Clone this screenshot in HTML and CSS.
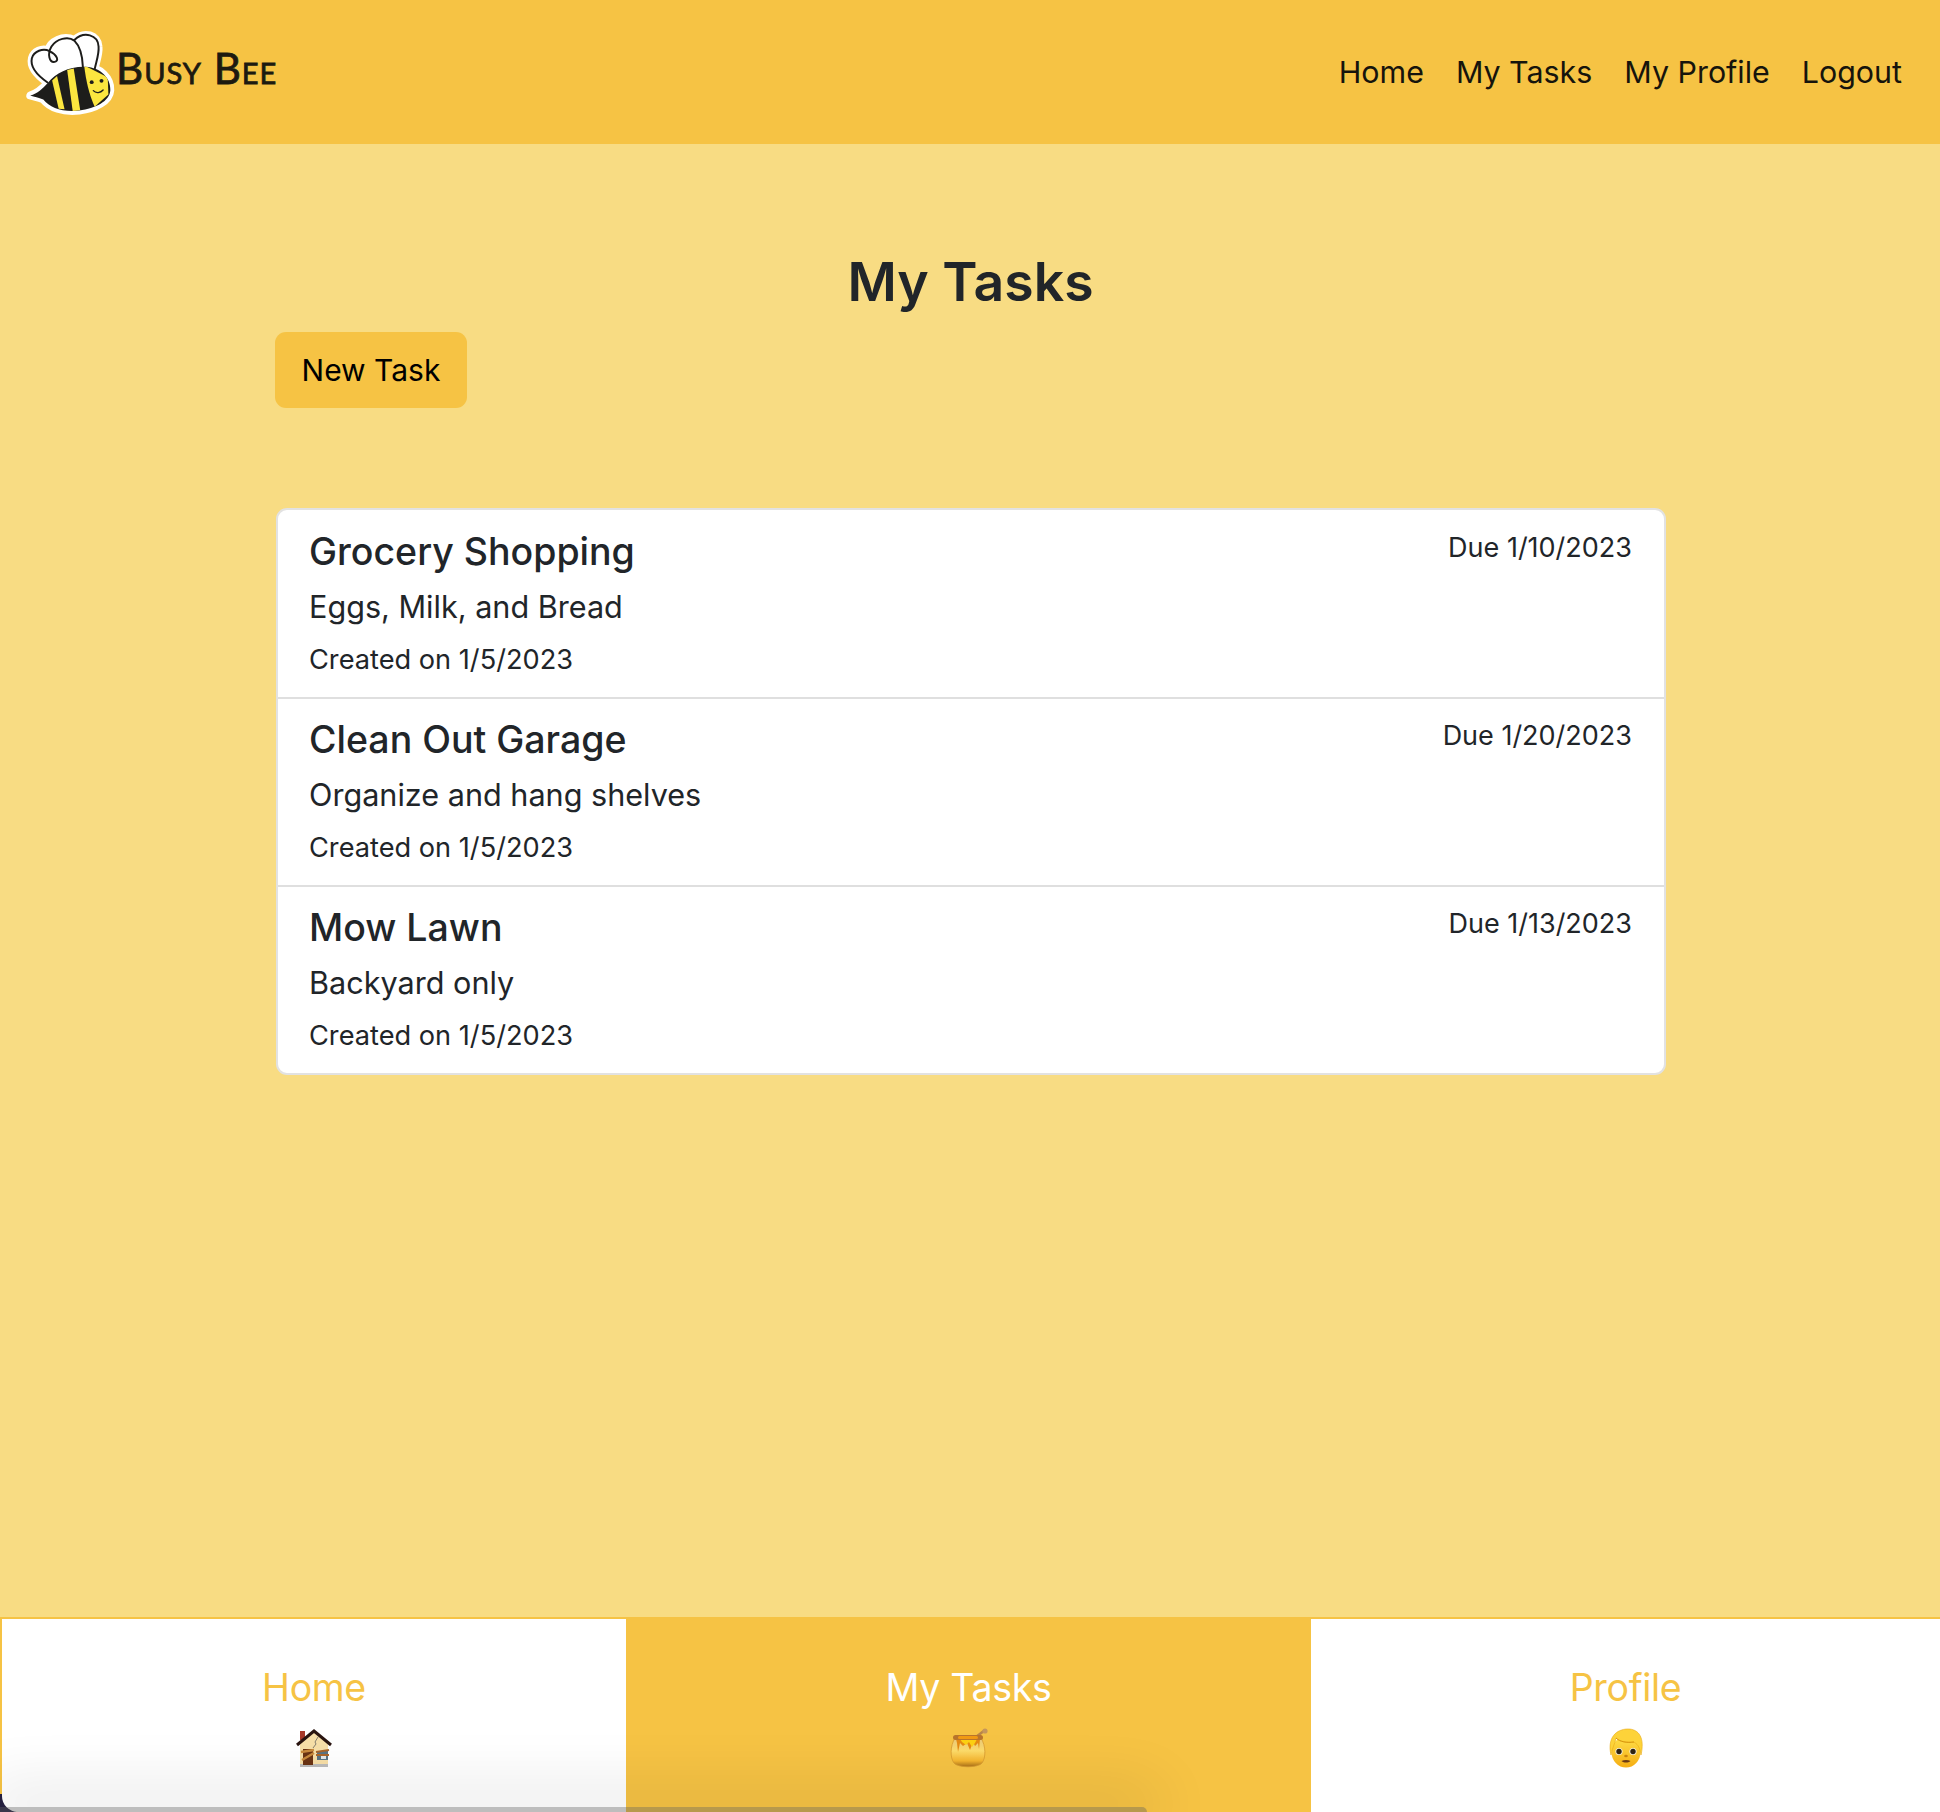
FILE: index.html
```html
<!DOCTYPE html>
<html lang="en">
<head>
    <meta charset="UTF-8">
    <meta name="viewport" content="width=device-width, initial-scale=1.0">
    <title>Busy Bee</title>
    <link rel="stylesheet" href="styles.css">
</head>
<body>
    <header class="navbar">
        <a class="brand" href="#">
            <svg class="bee" viewBox="0 0 330 315" aria-hidden="true">
                <defs>
                    <clipPath id="beeBody">
                        <path d="M25 228 C48 220 62 208 78 190 C105 158 145 138 195 140 C240 142 272 175 270 212 C268 245 225 268 175 274 C125 280 85 265 65 240 C50 234 38 232 25 228 Z"/>
                    </clipPath>
                </defs>
                <g fill="#fff" stroke="#fff" stroke-width="24" stroke-linejoin="round">
                    <path d="M78 188 C45 165 24 140 30 114 C36 92 62 82 80 90 C86 62 125 42 160 58 C190 30 232 42 234 78 C236 100 228 120 222 145 Z"/>
                    <path d="M25 228 C48 220 62 208 78 190 C105 158 145 138 195 140 C240 142 272 175 270 212 C268 245 225 268 175 274 C125 280 85 265 65 240 C50 234 38 232 25 228 Z"/>
                </g>
                <path d="M78 188 C45 165 24 140 30 114 C36 92 64 82 84 92 C108 104 114 122 100 125 C84 128 76 102 90 78 C105 55 140 45 160 60 C178 78 185 110 186 140" fill="none" stroke="#1d1d1b" stroke-width="6" stroke-linecap="round"/>
                <path d="M160 58 C190 30 232 42 234 78 C236 100 228 120 222 148" fill="none" stroke="#1d1d1b" stroke-width="6" stroke-linecap="round"/>
                <path d="M25 228 C48 220 62 208 78 190 C105 158 145 138 195 140 C240 142 272 175 270 212 C268 245 225 268 175 274 C125 280 85 265 65 240 C50 234 38 232 25 228 Z" fill="#1d1d1b"/>
                <g clip-path="url(#beeBody)" fill="#fbe63f">
                    <path d="M92 182 L107 168 L130 270 L112 268 Z"/>
                    <path d="M138 150 L158 145 L178 274 L155 276 Z"/>
                    <path d="M190 136 L262 172 L264 225 L222 262 C205 225 195 180 190 136 Z"/>
                </g>
                <circle cx="213" cy="187" r="6" fill="#1d1d1b"/>
                <circle cx="243" cy="183" r="6" fill="#1d1d1b"/>
                <path d="M218 213 C226 222 240 220 248 211" fill="none" stroke="#1d1d1b" stroke-width="4" stroke-linecap="round"/>
            </svg>
            <span class="brand-name">Busy Bee</span>
        </a>
        <nav class="nav-links">
            <a href="#">Home</a>
            <a href="#">My Tasks</a>
            <a href="#">My Profile</a>
            <a href="#">Logout</a>
        </nav>
    </header>

    <main class="content">
        <h1>My Tasks</h1>
        <a class="new-task" href="#">New Task</a>
        <ul class="task-list">
            <li class="task">
                <div class="task-top">
                    <h2>Grocery Shopping</h2>
                    <span class="due">Due 1/10/2023</span>
                </div>
                <p class="task-desc">Eggs, Milk, and Bread</p>
                <p class="task-created">Created on 1/5/2023</p>
            </li>
            <li class="task">
                <div class="task-top">
                    <h2>Clean Out Garage</h2>
                    <span class="due">Due 1/20/2023</span>
                </div>
                <p class="task-desc">Organize and hang shelves</p>
                <p class="task-created">Created on 1/5/2023</p>
            </li>
            <li class="task">
                <div class="task-top">
                    <h2>Mow Lawn</h2>
                    <span class="due">Due 1/13/2023</span>
                </div>
                <p class="task-desc">Backyard only</p>
                <p class="task-created">Created on 1/5/2023</p>
            </li>
        </ul>
    </main>

    <footer class="tabs">
        <a class="tab" href="#">
            <span>Home</span>
            <svg class="tab-icon" viewBox="0 0 40 40" aria-hidden="true">
                <rect x="6" y="3" width="5" height="9" fill="#a83a2a"/>
                <path d="M6 15 L20 4 L34 15 L34 38 L6 38 Z" fill="#f7dfa8"/>
                <rect x="6" y="36" width="28" height="3" fill="#bbb"/>
                <path d="M3 17 L20 3 L37 17" fill="none" stroke="#2a1510" stroke-width="3"/>
                <path d="M24 9 L21 14 L22 16 L19 20" fill="none" stroke="#555" stroke-width=".7"/>
                <rect x="9" y="21" width="10" height="16" fill="#6b3414"/>
                <path d="M7 24 L20 22 M8 32 L20 25" stroke="#c98a3c" stroke-width="2.4"/>
                <rect x="23" y="23" width="11" height="9" fill="#5a7484"/>
                <rect x="27" y="28" width="5" height="3" fill="#e3e8ea"/>
                <path d="M22 24 L35 22 M22 27 L35 27" stroke="#a9662a" stroke-width="2.2"/>
            </svg>
        </a>
        <a class="tab tab-active" href="#">
            <span>My Tasks</span>
            <svg class="tab-icon" viewBox="0 0 40 40" aria-hidden="true">
                <defs>
                    <linearGradient id="honey" x1="0" y1="0" x2="0" y2="1">
                        <stop offset="0" stop-color="#e8c77c"/>
                        <stop offset=".45" stop-color="#fddc6a"/>
                        <stop offset=".8" stop-color="#f5b52e"/>
                        <stop offset="1" stop-color="#a9701a"/>
                    </linearGradient>
                </defs>
                <path d="M27 9 L36 2" stroke="#b98548" stroke-width="2.6"/>
                <circle cx="36" cy="3" r="2.6" fill="#c6965a"/>
                <path d="M6 10 C1 18 1 30 5 35 C9 40 29 40 33 35 C37 30 37 18 32 10 Z" fill="url(#honey)" stroke="#d79a30" stroke-width=".8"/>
                <path d="M7 11 L31 11 L30 21 L29 15 L26 18 L24 14 L21 22 L18 15 L14 18 L11 15 L9 24 L8 15 Z" fill="#e58a12"/>
                <path d="M11 11 L28 11 L26 15 L23 19 L20 14 L17 17 L13 14 Z" fill="#fcd013"/>
                <rect x="4" y="7" width="30" height="5" rx="2.5" fill="#b9752c"/>
                <rect x="9" y="8" width="20" height="3" rx="1.5" fill="#f29a13"/>
            </svg>
        </a>
        <a class="tab" href="#">
            <span>Profile</span>
            <svg class="tab-icon" viewBox="0 0 40 40" aria-hidden="true">
                <defs>
                    <linearGradient id="face" x1="0" y1="0" x2="0" y2="1">
                        <stop offset="0" stop-color="#ffe04a"/>
                        <stop offset="1" stop-color="#f5ae14"/>
                    </linearGradient>
                </defs>
                <ellipse cx="20" cy="24" rx="14.5" ry="15.5" fill="url(#face)"/>
                <path d="M5 27 C1 10 10 1 22 1 C33 1 39 10 35 27 C34 19 31 15 27 14 C20 15 13 13 10 10 C9 16 6 20 5 27 Z" fill="#fdd339" stroke="#eaa912" stroke-width=".6"/>
                <path d="M10 10 C14 14 21 15 28 14" fill="none" stroke="#d8960f" stroke-width="1"/>
                <circle cx="13" cy="23.5" r="3.6" fill="#f6f1df"/>
                <circle cx="27" cy="23.5" r="3.6" fill="#f6f1df"/>
                <circle cx="13" cy="23.5" r="2.7" fill="#2f2412"/>
                <circle cx="27" cy="23.5" r="2.7" fill="#2f2412"/>
                <ellipse cx="20" cy="28" rx="1.8" ry="1.3" fill="#c9840e"/>
                <path d="M15.5 33 C18 31.5 22 31.5 24.5 33 C22 35 18 35 15.5 33 Z" fill="#6b3a14"/>
            </svg>
        </a>
        <div class="window-edge"></div>
    </footer>
</body>
</html>
```

FILE: styles.css
```css
* {
    box-sizing: border-box;
}
html, body {
    height: 100%;
}
body {
    margin: 0;
    display: flex;
    flex-direction: column;
    min-height: 1812px;
    font-family: "Inter", "Liberation Sans", sans-serif;
    background: #f8dc83;
    color: #212529;
    overflow: hidden;
}
a {
    text-decoration: none;
}
.navbar {
    height: 144px;
    flex-shrink: 0;
    display: flex;
    align-items: center;
    justify-content: space-between;
    padding: 0 38px 0 22px;
    background: #f6c344;
}
.brand {
    display: flex;
    align-items: center;
}
.bee {
    width: 108px;
    height: 103px;
    margin-right: -14px;
}
.brand-name {
    font-family: "Lato", sans-serif;
    font-size: 42px;
    font-variant: small-caps;
    letter-spacing: 1px;
    margin-top: -8px;
    color: #1d1a10;
    -webkit-text-stroke: 0.8px #1d1a10;
}
.nav-links {
    display: flex;
    gap: 32px;
}
.nav-links a {
    font-size: 30.4px;
    color: #16140c;
}
.content {
    flex: 1;
    width: 1391px;
    margin-left: 275px;
    padding-top: 105px;
}
h1 {
    margin: 0;
    height: 83px;
    font-size: 53.5px;
    line-height: 66px;
    font-weight: 600;
    text-align: center;
}
.new-task {
    display: inline-block;
    width: 192px;
    height: 76px;
    line-height: 76px;
    text-align: center;
    font-size: 30px;
    color: #000;
    background: #f6c344;
    border-radius: 11px;
}
.task-list {
    list-style: none;
    margin: 100px 0 0 1px;
    padding: 0;
    background: #fff;
    border: 2px solid #e2e2e2;
    border-radius: 11px;
}
.task {
    height: 188px;
    padding: 16px 32px 0 31px;
    border-top: 2px solid #dfdfdf;
}
.task:first-child {
    height: 187px;
    padding-top: 17px;
    border-top: 0;
}
.task-top {
    display: flex;
    justify-content: space-between;
}
h2 {
    margin: 0;
    font-size: 37.5px;
    line-height: 50px;
    font-weight: 500;
}
.due {
    font-size: 27px;
    line-height: 41px;
}
.task-desc {
    margin: 10px 0 0;
    font-size: 30.6px;
    line-height: 40px;
}
.task-created {
    margin: 15px 0 0;
    font-size: 27.2px;
    line-height: 36px;
}
.tabs {
    height: 195px;
    flex-shrink: 0;
    position: relative;
    display: grid;
    grid-template-columns: 624px 685px 629px;
    border-top: 2px solid #f6c344;
    padding-left: 2px;
    background: #f6c344;
}
.tabs::before {
    content: "";
    position: absolute;
    left: 0;
    bottom: 0;
    width: 16px;
    height: 18px;
    background: #262042;
}
.tab {
    position: relative;
    display: flex;
    flex-direction: column;
    align-items: center;
    padding-top: 45px;
    font-size: 37.5px;
    letter-spacing: -0.3px;
    line-height: 48px;
    color: #f6c344;
    background: #fff;
}
.tab:first-child {
    border-bottom-left-radius: 16px;
}
.tab-active {
    color: #fff;
    background: #f6c344;
}
.tab-icon {
    width: 40px;
    height: 40px;
    margin-top: 16px;
}
/* edge of another window showing at the bottom of the screen */
.window-edge {
    position: absolute;
    left: 0;
    bottom: 0;
    width: 1147px;
    height: 5px;
    background: rgba(90, 90, 90, 0.4);
    border-radius: 0 14px 0 0;
    box-shadow: 0 -6px 60px 14px rgba(0, 0, 0, 0.11);
}
```
